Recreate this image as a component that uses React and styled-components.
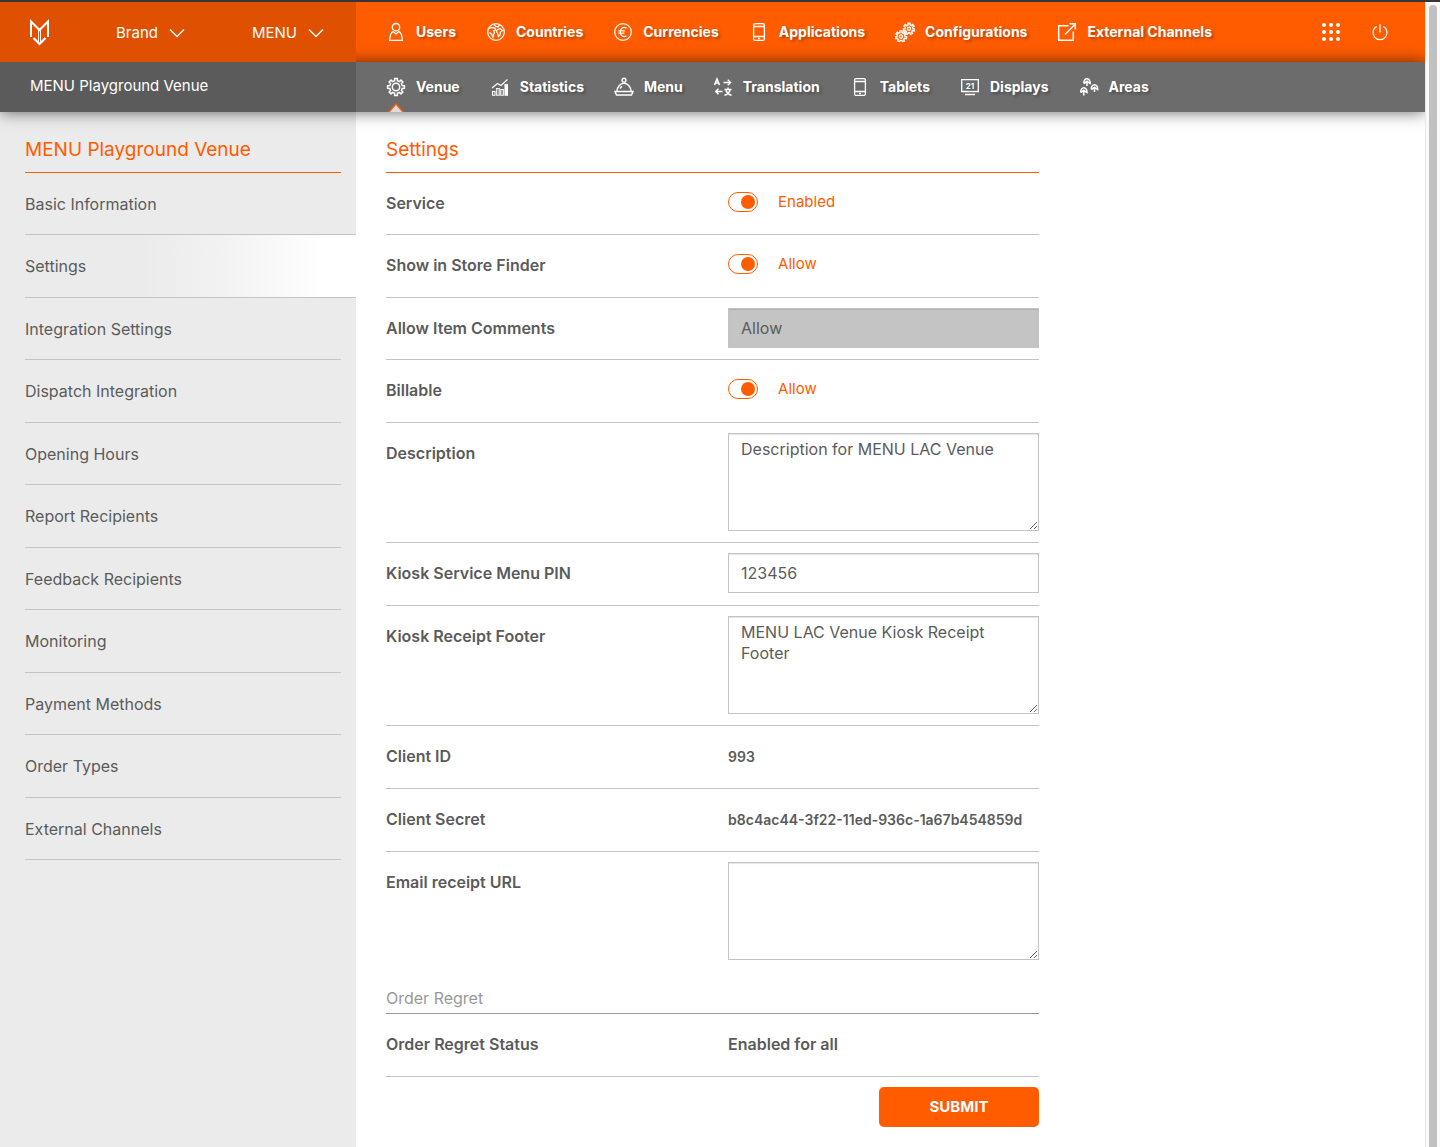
import React, { useState } from "react";
import styled, { createGlobalStyle } from "styled-components";

const GlobalStyle = createGlobalStyle`
  * {
    box-sizing: border-box;
  }
  body {
    margin: 0;
    background: #fff;
    color: #5b5b5b;
    font-family: Inter, "Open Sans", sans-serif;
    font-size: 16px;
  }
  button, input, textarea {
    font-family: inherit;
  }
`;

const Frame = styled.div`
  display: flex;
  min-height: 100vh;
  border-top: 2px solid #363636;
`;

const Page = styled.div`
  flex: 1;
  min-width: 0;
  display: flex;
  flex-direction: column;
  overflow: hidden;
`;

const ScrollTrack = styled.div`
  flex: 0 0 15px;
  padding: 3px 3px 0 3px;
  background: #fafafa;
  border-left: 1px solid #e8e8e8;
  display: flex;
`;

const ScrollThumb = styled.div`
  flex: 1;
  border-radius: 4px 4px 0 0;
  background: #c1c1c1;
`;

const Bar = styled.header`
  display: flex;
  height: 60px;
  background: #ff5c00;
  color: #fff;
`;

const Brands = styled.div`
  flex: 0 0 356px;
  display: flex;
  align-items: center;
  gap: 67px;
  padding-left: 29px;
  background: #df5000;
  position: relative;
  z-index: 2;
`;

const BrandButton = styled.button`
  display: flex;
  align-items: center;
  gap: 11px;
  padding: 2px 0 0;
  border: none;
  background: none;
  color: #fff;
  font-size: 15px;
  line-height: 20px;
  cursor: pointer;
`;

const SubBar = styled.div`
  display: flex;
  height: 50px;
  background: #6c6c6c;
  color: #fff;
  position: relative;
  z-index: 1;
  box-shadow: 0 0 15px rgba(0, 0, 0, 0.6);
`;

const VenueName = styled.div`
  flex: 0 0 356px;
  padding-left: 30px;
  background: #5b5b5b;
  font-size: 15px;
  line-height: 48px;
`;

const Nav = styled.nav`
  flex: 1;
  display: flex;
  gap: 30px;
  padding-left: 30px;
`;

const NavLink = styled.a`
  display: flex;
  align-items: center;
  gap: 10px;
  position: relative;
  color: #fff;
  font-size: 14px;
  font-weight: 700;
  text-decoration: none;
  text-shadow: 2px 2px 3px rgba(0, 0, 0, 0.3);
`;

const NavText = styled.span`
  padding-bottom: 2px;
`;

const Caret = styled.svg`
  position: absolute;
  left: 2px;
  bottom: 0;
`;

const Tools = styled.div`
  display: flex;
  align-items: center;
  gap: 29px;
  padding-right: 35px;
`;

const ToolButton = styled.button`
  display: flex;
  padding: 0;
  border: none;
  background: none;
  color: #fff;
  cursor: pointer;
`;

const Body = styled.div`
  flex: 1;
  display: flex;
`;

const Sidebar = styled.aside`
  flex: 0 0 356px;
  padding: 0 15px 0 25px;
  background: #ebebeb;
`;

const Title = styled.h2`
  margin: 0;
  padding: 26px 0 10px;
  border-bottom: 1px solid #ff5c00;
  color: #ff5c00;
  font-size: 19px;
  font-weight: 400;
  line-height: 24px;
`;

const Menu = styled.ul`
  margin: 0;
  padding: 0;
  list-style: none;
`;

const MenuItem = styled.li`
  height: 62px;
  border-bottom: 1px solid #c4c4c4;
  &:nth-child(even) {
    height: 63px;
  }
  ${(props) =>
    props.$active &&
    `
    && {
      height: 64px;
      margin: -1px -15px 0 0;
      border-top: 1px solid #c4c4c4;
      background: linear-gradient(to right, #ebebeb 35%, #f2f2f2 60%, #fff 90%);
    }
  `}
`;

const MenuLink = styled.a`
  display: block;
  color: #5b5b5b;
  line-height: 62px;
  text-decoration: none;
`;

const Main = styled.main`
  flex: 1;
  padding: 0 30px 20px;
`;

const Form = styled.form`
  max-width: 653px;
`;

const Row = styled.div`
  display: grid;
  grid-template-columns: 11fr 10fr;
  align-items: start;
  min-height: 62px;
  padding: 10px 0 11px;
  border-bottom: ${(props) => (props.$last ? "none" : "1px solid #c4c4c4")};
  &:nth-of-type(even) {
    min-height: ${(props) => (props.$last ? "0" : "63px")};
  }
`;

const Label = styled.label`
  font-weight: 600;
  line-height: 40px;
`;

const Value = styled.output`
  font-size: ${(props) => (props.$small ? "14px" : "16px")};
  font-weight: 600;
  line-height: 41px;
`;

const Switch = styled.label`
  display: flex;
  align-items: center;
  gap: 20px;
  height: 38px;
  color: #ff5c00;
  font-size: 15px;
`;

const SwitchText = styled.span`
  padding-bottom: 2px;
`;

const SwitchInput = styled.input`
  appearance: none;
  width: 30px;
  height: 20px;
  margin: 0;
  padding: 2px;
  border: 1px solid #ff5c00;
  border-radius: 10px;
  display: flex;
  justify-content: flex-start;
  &:checked {
    justify-content: flex-end;
  }
  &::before {
    content: "";
    width: 14px;
    height: 14px;
    border-radius: 50%;
    background: #ff5c00;
  }
`;

const TextInput = styled.input`
  width: 100%;
  height: 40px;
  padding: 0 12px;
  border: 1px solid #c4c4c4;
  border-radius: 0;
  background: #fff;
  box-shadow: inset 0 1px 1px rgba(0, 0, 0, 0.1);
  color: #5b5b5b;
  font-size: 16px;
  &:disabled {
    background: #c4c4c4;
  }
`;

const TextArea = styled.textarea`
  display: block;
  width: 100%;
  height: 98px;
  padding: 5px 12px;
  border: 1px solid #c4c4c4;
  border-radius: 0;
  box-shadow: inset 0 1px 1px rgba(0, 0, 0, 0.1);
  color: #5b5b5b;
  font-size: 16px;
  line-height: 21px;
  resize: vertical;
`;

const SubTitle = styled.h3`
  margin: 0;
  padding: 16px 0 4px;
  border-bottom: 1px solid #999;
  color: #999;
  font-size: 16px;
  font-weight: 400;
  line-height: 22px;
`;

const Actions = styled.div`
  display: flex;
  justify-content: flex-end;
  padding-top: 10px;
`;

const Submit = styled.button`
  width: 160px;
  height: 40px;
  padding: 0 0 2px;
  border: none;
  border-radius: 5px;
  background: #ff5c00;
  color: #fff;
  font-size: 15px;
  font-weight: 700;
  cursor: pointer;
`;

// outline of a cog wheel, as an svg path
const gear = (cx, cy, inner, outer, teeth) => {
  const step = (Math.PI * 2) / teeth;
  const points = [];
  for (let i = 0; i < teeth; i++) {
    const a = i * step - Math.PI / 2;
    [
      [-0.28, inner],
      [-0.2, outer],
      [0.2, outer],
      [0.28, inner],
    ].forEach(([t, r]) => {
      points.push(
        `${(cx + Math.cos(a + t * step) * r).toFixed(2)} ${(cy + Math.sin(a + t * step) * r).toFixed(2)}`
      );
    });
  }
  return `M${points.join("L")}Z`;
};

const Icon = ({ children, width = 1.3 }) => (
  <svg
    width="20"
    height="20"
    viewBox="0 0 20 20"
    fill="none"
    stroke="currentColor"
    strokeWidth={width}
    aria-hidden="true"
  >
    {children}
  </svg>
);

const Logo = () => (
  <svg width="20" height="28" viewBox="0 0 20 28" fill="none" stroke="#fff" aria-hidden="true">
    <path d="M2 19V3.500L10.500 12L19 3.500V19" strokeWidth="2" />
    <path d="M9.500 12V25M11.500 12V25" strokeWidth="0.9" />
    <path d="M4.500 20L10.500 26L16.500 20" strokeWidth="2.200" />
  </svg>
);

const Chevron = () => (
  <svg width="16" height="10" viewBox="0 0 16 10" fill="none" stroke="#fff" strokeWidth="1.4" aria-hidden="true">
    <path d="M1 1.500L8 8.500L15 1.500" />
  </svg>
);

const UserIcon = () => (
  <Icon>
    <circle cx="10" cy="5.200" r="3.700" />
    <path d="M7 9.600C4.700 10.600 4 13 3.700 18.300H16.300C16 13 15.300 10.600 13 9.600L10 12L7 9.600Z" />
  </Icon>
);

const GlobeIcon = () => (
  <Icon>
    <circle cx="10" cy="10" r="8.300" />
    <path d="M3 6.500L5.500 5.500L9 6L9.500 8L7.500 9L8.500 11L7.500 12.500L7 15L5.500 12L3.500 10.500M8 2.500L10 4.500L12 5L13.500 3M11 8L14 6.500L16.500 8.500L14.500 10L14 13L12.500 14.500L11.500 11L10.500 9.500Z" />
  </Icon>
);

const EuroIcon = () => (
  <Icon>
    <circle cx="10" cy="10" r="8.300" />
    <path d="M13.500 6.300C10.500 4.200 7.300 6.500 7.300 10C7.300 13.500 10.500 15.800 13.500 13.700M5.300 8.800H11.800M5.300 11.200H11.300" />
  </Icon>
);

const DeviceIcon = () => (
  <Icon>
    <rect x="4.600" y="1.600" width="10.800" height="16.800" rx="1.500" />
    <path d="M4.600 4.500H15.400M4.600 14.500H15.400" />
    <path d="M9 16.500H11" strokeWidth="1.500" />
  </Icon>
);

const GearsIcon = () => (
  <Icon width={1.4}>
    <path d={gear(14, 6.8, 4, 5.7, 7)} />
    <circle cx="14" cy="6.800" r="1.600" />
    <path d={gear(6, 14.5, 4, 5.7, 7)} />
    <circle cx="6" cy="14.500" r="1.600" />
  </Icon>
);

const ExternalIcon = () => (
  <Icon width={1.5}>
    <path d="M11.500 3.700H1.700V18.300H16.300V9.500M8 12.500L17.500 2.800M12.500 1.800H18.300V7.500" />
  </Icon>
);

const GearIcon = () => (
  <Icon width={1.5}>
    <path d={gear(10, 10, 6.4, 8.5, 8)} />
    <circle cx="10" cy="10" r="3.700" />
  </Icon>
);

const StatsIcon = () => (
  <Icon width={1.1}>
    <path d="M2.500 14.500H5V18.200H2.500ZM6.700 11.500H9.200V18.200H6.700ZM10.800 12.500H13.300V18.200H10.800Z" />
    <path d="M15 7.500H17.500V18.200H15Z" fill="currentColor" />
    <path d="M2 11L7.500 6.500L11 8.500L17.500 2.500" />
  </Icon>
);

const ClocheIcon = () => (
  <Icon width={1.4}>
    <circle cx="10" cy="3.200" r="1.900" />
    <path d="M2.800 14.500C3.200 10 6 6.300 10 6.300C14 6.300 16.800 10 17.200 14.500M1 14.500H19L17.500 18H2.500ZM5.800 11.500L8 9.300" />
  </Icon>
);

const TranslateIcon = () => (
  <Icon width={1.5}>
    <path d="M1.500 8L4 2L6.500 8M2.500 6H5.500M10.500 5.500H17.500M14.800 2.800L17.500 5.500L14.800 8.200M9.500 14.500H3M5.500 11.800L2.800 14.500L5.500 17.200M11.500 12.500H18.500M15 10.500V12.500M17 13C16.500 15.500 14 17.500 11.500 18.300M13 13C13.500 15.500 16 17.500 18.500 18.300" />
  </Icon>
);

const DisplayText = styled.text`
  font-size: 8px;
  font-weight: 700;
  text-anchor: middle;
`;

const DisplayIcon = () => (
  <Icon width={1.3}>
    <path d="M1.700 2.700H18.300V14.500H1.700ZM5 17.500H15" />
    <DisplayText x="10" y="11.500" fill="currentColor" stroke="none">21</DisplayText>
  </Icon>
);

const AreasIcon = () => (
  <Icon width={1.5}>
    <path d="M8 9V3.500M4.800 6.500C4.500 0.300 11.500 0.300 11.200 6.500L8 4.500L4.800 6.500M4.800 18.500V12.500M1.700 15.500C1.500 9 8.300 9 8 15.500L4.800 13.500L1.700 15.500M15.500 15V9.500M12.300 12.500C12 6 19 6 18.700 12.500L15.500 10.500L12.300 12.500" />
  </Icon>
);

const GridIcon = () => (
  <svg width="20" height="20" viewBox="0 0 20 20" fill="currentColor" aria-hidden="true">
    {[3, 10, 17].map((y) => [3, 10, 17].map((x) => <circle key={`${x}-${y}`} cx={x} cy={y} r="2" />))}
  </svg>
);

const PowerIcon = () => (
  <Icon width={1.2}>
    <path d="M10 2.300V10.500M6.700 4.400A7 7 0 1 0 13.300 4.400" />
  </Icon>
);

const globalLinks = [
  { name: "Users", icon: <UserIcon /> },
  { name: "Countries", icon: <GlobeIcon /> },
  { name: "Currencies", icon: <EuroIcon /> },
  { name: "Applications", icon: <DeviceIcon /> },
  { name: "Configurations", icon: <GearsIcon /> },
  { name: "External Channels", icon: <ExternalIcon /> },
];

const venueLinks = [
  { name: "Venue", icon: <GearIcon />, active: true },
  { name: "Statistics", icon: <StatsIcon /> },
  { name: "Menu", icon: <ClocheIcon /> },
  { name: "Translation", icon: <TranslateIcon /> },
  { name: "Tablets", icon: <DeviceIcon /> },
  { name: "Displays", icon: <DisplayIcon /> },
  { name: "Areas", icon: <AreasIcon /> },
];

const sections = [
  "Basic Information",
  "Settings",
  "Integration Settings",
  "Dispatch Integration",
  "Opening Hours",
  "Report Recipients",
  "Feedback Recipients",
  "Monitoring",
  "Payment Methods",
  "Order Types",
  "External Channels",
];

const NavItems = ({ links }) => (
  <Nav>
    {links.map((l) => (
      <NavLink href="#" key={l.name}>
        {l.icon}
        <NavText>{l.name}</NavText>
        {l.active && (
          <Caret width="16" height="10" viewBox="0 0 16 10" aria-hidden="true">
            <path d="M0 10L8 1L16 10Z" fill="#ff5c00" />
            <path d="M2 10L8 3L14 10Z" fill="#dcdcdc" />
          </Caret>
        )}
      </NavLink>
    ))}
  </Nav>
);

const SwitchRow = ({ id, label, text }) => {
  const [on, setOn] = useState(true);

  return (
    <Row>
      <Label htmlFor={id}>{label}</Label>
      <Switch>
        <SwitchInput id={id} type="checkbox" checked={on} onChange={() => setOn(!on)} />
        <SwitchText>{text}</SwitchText>
      </Switch>
    </Row>
  );
};

const AreaRow = ({ id, label, text, last }) => (
  <Row $last={last}>
    <Label htmlFor={id}>{label}</Label>
    <TextArea id={id} defaultValue={text} />
  </Row>
);

const ValueRow = ({ id, label, text, small }) => (
  <Row>
    <Label htmlFor={id}>{label}</Label>
    <Value id={id} $small={small}>{text}</Value>
  </Row>
);

const App = () => {
  return (
    <Frame>
      <GlobalStyle />
      <Page>
        <Bar>
          <Brands>
            <Logo />
            <BrandButton>Brand <Chevron /></BrandButton>
            <BrandButton>MENU <Chevron /></BrandButton>
          </Brands>
          <NavItems links={globalLinks} />
          <Tools>
            <ToolButton aria-label="Apps"><GridIcon /></ToolButton>
            <ToolButton aria-label="Log out"><PowerIcon /></ToolButton>
          </Tools>
        </Bar>
        <SubBar>
          <VenueName>MENU Playground Venue</VenueName>
          <NavItems links={venueLinks} />
        </SubBar>
        <Body>
          <Sidebar>
            <Title>MENU Playground Venue</Title>
            <Menu>
              {sections.map((s) => (
                <MenuItem key={s} $active={s === "Settings"}>
                  <MenuLink href="#">{s}</MenuLink>
                </MenuItem>
              ))}
            </Menu>
          </Sidebar>
          <Main>
            <Form onSubmit={(e) => e.preventDefault()}>
              <Title>Settings</Title>
              <SwitchRow id="service" label="Service" text="Enabled" />
              <SwitchRow id="finder" label="Show in Store Finder" text="Allow" />
              <Row>
                <Label htmlFor="comments">Allow Item Comments</Label>
                <TextInput id="comments" defaultValue="Allow" disabled />
              </Row>
              <SwitchRow id="billable" label="Billable" text="Allow" />
              <AreaRow id="description" label="Description" text="Description for MENU LAC Venue" />
              <Row>
                <Label htmlFor="pin">Kiosk Service Menu PIN</Label>
                <TextInput id="pin" defaultValue="123456" />
              </Row>
              <AreaRow id="footer" label="Kiosk Receipt Footer" text="MENU LAC Venue Kiosk Receipt Footer" />
              <ValueRow id="client" label="Client ID" text="993" small />
              <ValueRow id="secret" label="Client Secret" text="b8c4ac44-3f22-11ed-936c-1a67b454859d" small />
              <AreaRow id="email" label="Email receipt URL" text="" last />
              <SubTitle>Order Regret</SubTitle>
              <ValueRow id="regret" label="Order Regret Status" text="Enabled for all" />
              <Actions>
                <Submit type="submit">SUBMIT</Submit>
              </Actions>
            </Form>
          </Main>
        </Body>
      </Page>
      <ScrollTrack>
        <ScrollThumb />
      </ScrollTrack>
    </Frame>
  );
};

export default App;
